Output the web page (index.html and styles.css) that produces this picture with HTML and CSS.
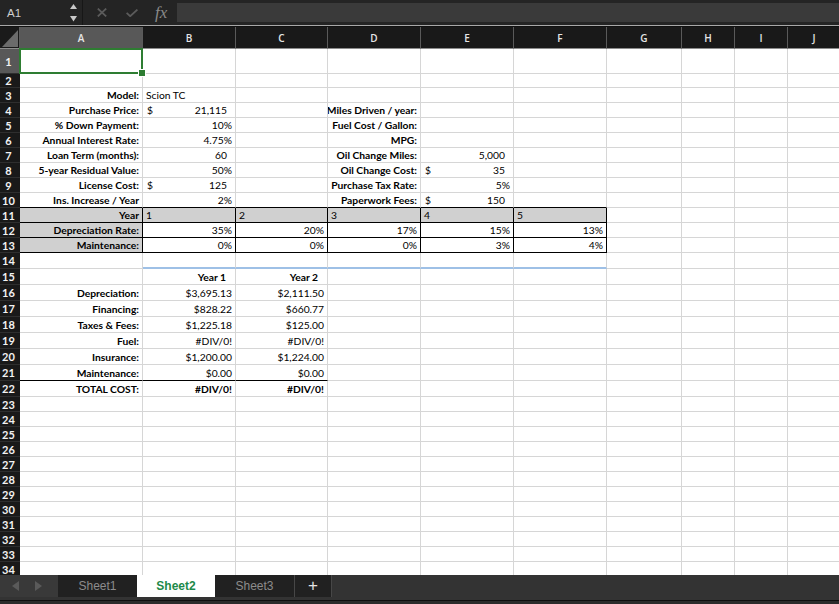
FILE: index.html
```html
<!DOCTYPE html>
<html>
<head>
<meta charset="utf-8">
<link rel="stylesheet" href="styles.css">
</head>
<body>
<div class="app">
  <div class="fbar">
    <div class="namebox">A1</div>
    <svg class="stepper" width="7" height="18" viewBox="0 0 7 18"><polygon points="0,5 3.5,0 7,5" /><polygon points="0,12 7,12 3.5,17.5" /></svg>
    <div class="fsep"></div>
    <svg class="ico-x" width="10" height="9" viewBox="0 0 10 9"><path d="M0.8 0.6 L9.2 8.4 M9.2 0.6 L0.8 8.4" /></svg>
    <svg class="ico-ok" width="12" height="8" viewBox="0 0 12 8"><path d="M0.6 3.8 L4.2 7.2 L11.4 0.6" /></svg>
    <span class="fx">fx</span>
    <div class="finput"></div>
  </div>
  <div class="sheet">
    <div class="corner"><svg width="16" height="17" viewBox="0 0 16 17"><polygon points="0,17 16,17 16,0" /></svg></div><div class="ch on">A</div><div class="ch">B</div><div class="ch">C</div><div class="ch">D</div><div class="ch">E</div><div class="ch">F</div><div class="ch">G</div><div class="ch">H</div><div class="ch">I</div><div class="ch">J</div>

    <div class="rh on">1</div><div class="cur"></div><div></div><div></div><div></div><div></div><div></div><div></div><div></div><div></div><div></div>
    <div class="rh">2</div><div></div><div></div><div></div><div></div><div></div><div></div><div></div><div></div><div></div><div></div>
    <div class="rh">3</div><div class="l">Model:</div><div class="t">Scion TC</div><div></div><div></div><div></div><div></div><div></div><div></div><div></div><div></div>
    <div class="rh">4</div><div class="l">Purchase Price:</div><div class="a"><span>$</span><span>21,115</span></div><div></div><div class="l">Miles Driven / year:</div><div></div><div></div><div></div><div></div><div></div><div></div>
    <div class="rh">5</div><div class="l">% Down Payment:</div><div class="n">10%</div><div></div><div class="l">Fuel Cost / Gallon:</div><div></div><div></div><div></div><div></div><div></div><div></div>
    <div class="rh">6</div><div class="l">Annual Interest Rate:</div><div class="n">4.75%</div><div></div><div class="l">MPG:</div><div></div><div></div><div></div><div></div><div></div><div></div>
    <div class="rh">7</div><div class="l">Loan Term (months):</div><div class="ar">60</div><div></div><div class="l">Oil Change Miles:</div><div class="ar">5,000</div><div></div><div></div><div></div><div></div><div></div>
    <div class="rh">8</div><div class="l">5-year Residual Value:</div><div class="n">50%</div><div></div><div class="l">Oil Change Cost:</div><div class="a"><span>$</span><span>35</span></div><div></div><div></div><div></div><div></div><div></div>
    <div class="rh">9</div><div class="l">License Cost:</div><div class="a"><span>$</span><span>125</span></div><div></div><div class="l">Purchase Tax Rate:</div><div class="n">5%</div><div></div><div></div><div></div><div></div><div></div>
    <div class="rh">10</div><div class="l bb">Ins. Increase / Year</div><div class="n bb">2%</div><div class="bb"></div><div class="l bb">Paperwork Fees:</div><div class="a bb"><span>$</span><span>150</span></div><div class="bb"></div><div></div><div></div><div></div><div></div>
    <div class="rh">11</div><div class="l g bk">Year</div><div class="t g bk">1</div><div class="t g bk">2</div><div class="t g bk">3</div><div class="t g bk">4</div><div class="t g bk">5</div><div></div><div></div><div></div><div></div>
    <div class="rh">12</div><div class="l g bk">Depreciation Rate:</div><div class="n bk">35%</div><div class="n bk">20%</div><div class="n bk">17%</div><div class="n bk">15%</div><div class="n bk">13%</div><div></div><div></div><div></div><div></div>
    <div class="rh">13</div><div class="l g bk">Maintenance:</div><div class="n bk">0%</div><div class="n bk">0%</div><div class="n bk">0%</div><div class="n bk">3%</div><div class="n bk">4%</div><div></div><div></div><div></div><div></div>
    <div class="rh">14</div><div></div><div class="bl"></div><div class="bl"></div><div class="bl"></div><div class="bl"></div><div class="bl"></div><div></div><div></div><div></div><div></div>
    <div class="rh">15</div><div></div><div class="yh">Year 1</div><div class="yh">Year 2</div><div></div><div></div><div></div><div></div><div></div><div></div><div></div>
    <div class="rh">16</div><div class="l">Depreciation:</div><div class="n">$3,695.13</div><div class="n">$2,111.50</div><div></div><div></div><div></div><div></div><div></div><div></div><div></div>
    <div class="rh">17</div><div class="l">Financing:</div><div class="n">$828.22</div><div class="n">$660.77</div><div></div><div></div><div></div><div></div><div></div><div></div><div></div>
    <div class="rh">18</div><div class="l">Taxes &amp; Fees:</div><div class="n">$1,225.18</div><div class="n">$125.00</div><div></div><div></div><div></div><div></div><div></div><div></div><div></div>
    <div class="rh">19</div><div class="l">Fuel:</div><div class="n">#DIV/0!</div><div class="n">#DIV/0!</div><div></div><div></div><div></div><div></div><div></div><div></div><div></div>
    <div class="rh">20</div><div class="l">Insurance:</div><div class="n">$1,200.00</div><div class="n">$1,224.00</div><div></div><div></div><div></div><div></div><div></div><div></div><div></div>
    <div class="rh">21</div><div class="l bb">Maintenance:</div><div class="n bb">$0.00</div><div class="n bb">$0.00</div><div></div><div></div><div></div><div></div><div></div><div></div><div></div>
    <div class="rh">22</div><div class="l">TOTAL COST:</div><div class="n b">#DIV/0!</div><div class="n b">#DIV/0!</div><div></div><div></div><div></div><div></div><div></div><div></div><div></div>
    <div class="rh">23</div><div></div><div></div><div></div><div></div><div></div><div></div><div></div><div></div><div></div><div></div>
    <div class="rh">24</div><div></div><div></div><div></div><div></div><div></div><div></div><div></div><div></div><div></div><div></div>
    <div class="rh">25</div><div></div><div></div><div></div><div></div><div></div><div></div><div></div><div></div><div></div><div></div>
    <div class="rh">26</div><div></div><div></div><div></div><div></div><div></div><div></div><div></div><div></div><div></div><div></div>
    <div class="rh">27</div><div></div><div></div><div></div><div></div><div></div><div></div><div></div><div></div><div></div><div></div>
    <div class="rh">28</div><div></div><div></div><div></div><div></div><div></div><div></div><div></div><div></div><div></div><div></div>
    <div class="rh">29</div><div></div><div></div><div></div><div></div><div></div><div></div><div></div><div></div><div></div><div></div>
    <div class="rh">30</div><div></div><div></div><div></div><div></div><div></div><div></div><div></div><div></div><div></div><div></div>
    <div class="rh">31</div><div></div><div></div><div></div><div></div><div></div><div></div><div></div><div></div><div></div><div></div>
    <div class="rh">32</div><div></div><div></div><div></div><div></div><div></div><div></div><div></div><div></div><div></div><div></div>
    <div class="rh">33</div><div></div><div></div><div></div><div></div><div></div><div></div><div></div><div></div><div></div><div></div>
    <div class="rh">34</div><div></div><div></div><div></div><div></div><div></div><div></div><div></div><div></div><div></div><div></div>
  </div>
  <div class="tabs">
    <div class="nav">
      <svg width="7" height="10" viewBox="0 0 7 10"><polygon points="7,0 7,10 0,5" /></svg>
      <svg width="7" height="10" viewBox="0 0 7 10"><polygon points="0,0 7,5 0,10" /></svg>
    </div>
    <div class="tab">Sheet1</div>
    <div class="tab on">Sheet2</div>
    <div class="tab">Sheet3</div>
    <div class="tab plus">+</div>
  </div>
  <div class="foot"></div>
</div>
</body>
</html>
```

FILE: styles.css
```css
* { box-sizing: border-box; }

body {
  margin: 0;
  width: 839px;
  height: 604px;
  overflow: hidden;
  background: #242424;
  font-family: Lato, "Open Sans", sans-serif;
}

.app {
  display: flex;
  flex-direction: column;
  width: 839px;
  height: 604px;
}

/* formula bar */
.fbar {
  flex: none;
  height: 26px;
  display: flex;
  align-items: center;
  background: #242424;
  border-bottom: 1px solid #a8a8a8;
}
.namebox {
  width: 70px;
  padding-left: 7px;
  color: #cfcfcf;
  font: 11.5px "Liberation Sans", Arial, sans-serif;
}
.stepper { fill: #c9c9c9; }
.fsep {
  width: 1px;
  height: 25px;
  margin-left: 5px;
  background: #171717;
}
.ico-x { margin-left: 14px; }
.ico-x path { stroke: #5b5b5b; stroke-width: 1.8; fill: none; }
.ico-ok { margin-left: 19px; }
.ico-ok path { stroke: #5b5b5b; stroke-width: 1.8; fill: none; }
.fx {
  width: 15px;
  margin-left: 17px;
  color: #8a8a8a;
  font: italic 17px "Liberation Serif", serif;
  line-height: 17px;
}
.finput {
  flex: 1;
  height: 19px;
  margin-left: 7px;
  background: #3a3a3a;
}

/* sheet grid */
.sheet {
  flex: none;
  height: 549px;
  overflow: hidden;
  border-top: 1px solid #111;
  display: grid;
  grid-template-columns: 20px 123px 93px 92px 93px 93px 93px 75px 53px 53px 53px;
  grid-template-rows: 22px 25px 14px repeat(11, 15px) repeat(9, 16px) repeat(12, 15px);
  background: #fff;
  width: 841px;
}
.sheet > div {
  border-right: 1px solid #d6d6d6;
  border-bottom: 1px solid #d6d6d6;
  display: flex;
  align-items: center;
  white-space: nowrap;
  overflow: hidden;
  font-size: 10.3px;
  color: #000;
  padding: 0 3px;
}

.sheet > .corner {
  background: #1a1a1a;
  border-right: 1px solid #5e5e5e;
  border-bottom: 1px solid #8c8c8c;
  padding: 0 1px 1px 0;
  align-items: flex-end;
  justify-content: flex-end;
}
.corner svg { fill: #6b6b6b; }

.sheet > .ch {
  background: #191919;
  color: #e6e6e6;
  justify-content: center;
  font: 600 10px "Open Sans", sans-serif;
  border-right: 1px solid #5a5a5a;
  border-bottom: 1px solid #8c8c8c;
}
.sheet > .ch.on { background: #585858; }

.sheet > .rh {
  background: #191919;
  color: #f2f2f2;
  justify-content: center;
  font-weight: 700;
  font-size: 11px;
  padding: 0 3px 0 0;
  border-right: none;
  border-bottom: 1px solid #2e2e2e;
}
.sheet > .rh.on { background: #585858; }

.sheet > .cur {
  position: relative;
  overflow: visible;
}
.cur::before {
  content: "";
  position: absolute;
  left: -1px;
  top: -1px;
  right: -1px;
  bottom: -1px;
  border: 2px solid #2e7d32;
}
.cur::after {
  content: "";
  position: absolute;
  right: -4px;
  bottom: -4px;
  width: 6px;
  height: 6px;
  background: #2e7d32;
  border: 1px solid #fff;
  z-index: 2;
}

.sheet > .l { justify-content: flex-end; font-weight: 700; }
.sheet > .t { justify-content: flex-start; padding-left: 3px; }
.sheet > .n { justify-content: flex-end; }
.sheet > .ar { justify-content: flex-end; padding-right: 8px; }
.sheet > .a { justify-content: space-between; padding-left: 4px; padding-right: 8px; }
.sheet > .yh { justify-content: flex-end; font-weight: 700; padding-right: 9px; }
.sheet > .b { font-weight: 700; }
.sheet > .g { background: #d0d0d0; }
.sheet > .bk { border-right-color: #000; border-bottom-color: #000; }
.sheet > .bb { border-bottom-color: #000; }
.sheet > .bl { border-bottom: 2px solid #9ec0e6; }

/* sheet tabs */
.tabs {
  flex: none;
  height: 25px;
  display: flex;
  align-items: flex-start;
  background: #333;
}
.nav {
  width: 58px;
  height: 22px;
  display: flex;
  align-items: center;
  gap: 16px;
  padding-left: 12px;
  background: #393939;
}
.nav svg { fill: #5a5a5a; }
.tab {
  width: 79px;
  height: 22px;
  display: flex;
  align-items: center;
  justify-content: center;
  background: #212121;
  color: #8c8c8c;
  font: 12px "Liberation Sans", Arial, sans-serif;
}
.tab.on {
  width: 78px;
  background: #fff;
  color: #1d8a4a;
  font-weight: 700;
}
.tab.plus {
  width: 38px;
  border-left: 1px solid #474747;
  border-right: 1px solid #474747;
  color: #e4e4e4;
  font-size: 17px;
}

.foot {
  flex: none;
  height: 4px;
  border-top: 1px solid #0e0e0e;
  background: #2b2b2b;
}
```
